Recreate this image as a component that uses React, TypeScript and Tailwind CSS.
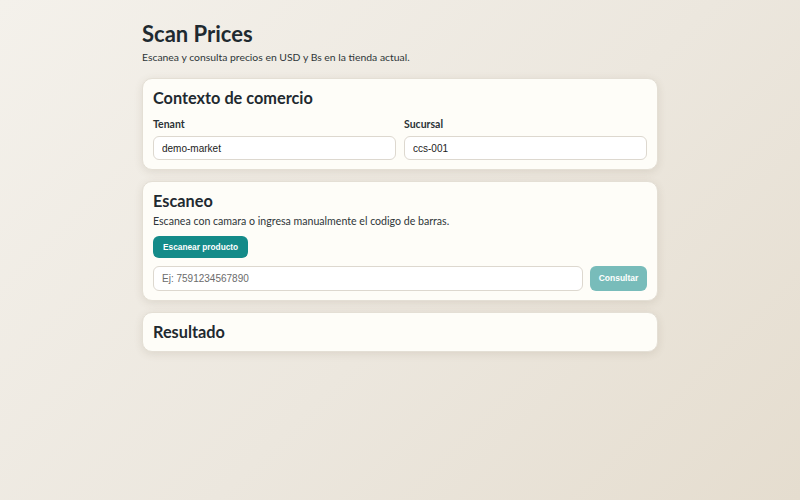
const heading = "font-['Lato','Noto_Sans',sans-serif]"

function Card({ title, children }: { title: string; children?: React.ReactNode }) {
  return (
    <section className="rounded-[10px] border border-[#e4dfd5] bg-[#fefdf8] px-[10px] pt-[8px] pb-[9px] shadow-[0_2px_8px_rgba(90,75,50,0.12)]">
      <h2 className={`${heading} text-[16.3px] leading-[21px] font-bold text-[#1f2a30]`}>{title}</h2>
      {children}
    </section>
  )
}

export default function App() {
  return (
    <div className="min-h-[500px] w-full bg-[linear-gradient(135deg,#f4f1eb_0%,#ece7de_55%,#e5ddcf_100%)]">
      <main className="mx-auto w-[516px] pt-[21px]">
        <h1 className={`${heading} text-[22px] leading-[26px] font-bold text-[#1f2a30]`}>Scan Prices</h1>
        <p className={`${heading} mt-[3px] text-[10.4px] leading-[14px] text-[#2e3638]`}>
          Escanea y consulta precios en USD y Bs en la tienda actual.
        </p>

        <div className="mt-[14px] flex flex-col gap-[11px]">
          <Card title="Contexto de comercio">
            <div className="mt-[10px] grid grid-cols-2 gap-[8px]">
              <label className={`${heading} text-[10.5px] leading-[13px] font-bold text-[#2b3336]`}>
                Tenant
                <input
                  defaultValue="demo-market"
                  className="mt-[5px] block h-[24px] w-full rounded-[6px] border border-[#ddd8cf] bg-white px-[8px] font-['Liberation_Sans',Arial,sans-serif] text-[10px] font-normal text-[#222] outline-none"
                />
              </label>
              <label className={`${heading} text-[10.5px] leading-[13px] font-bold text-[#2b3336]`}>
                Sucursal
                <input
                  defaultValue="ccs-001"
                  className="mt-[5px] block h-[24px] w-full rounded-[6px] border border-[#ddd8cf] bg-white px-[8px] font-['Liberation_Sans',Arial,sans-serif] text-[10px] font-normal text-[#222] outline-none"
                />
              </label>
            </div>
          </Card>

          <Card title="Escaneo">
            <p className={`${heading} mt-[3px] text-[10.6px] leading-[14px] text-[#2e3638]`}>
              Escanea con camara o ingresa manualmente el codigo de barras.
            </p>
            <button
              type="button"
              className="mt-[8px] h-[22px] rounded-[6px] bg-[#148b89] px-[10px] font-['Liberation_Sans',Arial,sans-serif] text-[8.3px] font-bold text-white"
            >
              Escanear producto
            </button>
            <div className="mt-[8px] flex gap-[7px]">
              <input
                placeholder="Ej: 7591234567890"
                className="h-[25px] flex-1 rounded-[6px] border border-[#ddd8cf] bg-white px-[8px] font-['Liberation_Sans',Arial,sans-serif] text-[10px] text-[#222] outline-none placeholder:text-[#6b6b6b]"
              />
              <button
                type="button"
                className="h-[25px] w-[57px] rounded-[6px] bg-[#78bcba] font-['Liberation_Sans',Arial,sans-serif] text-[8.5px] font-bold text-white"
              >
                Consultar
              </button>
            </div>
          </Card>

          <Card title="Resultado" />
        </div>
      </main>
    </div>
  )
}
